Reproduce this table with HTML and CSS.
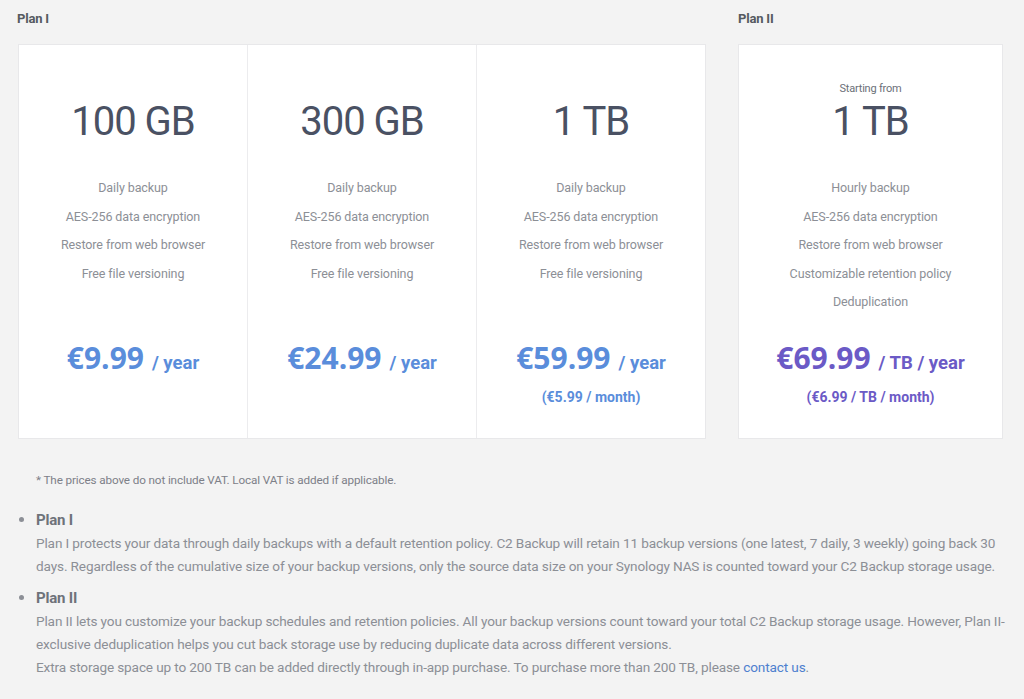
FILE: index.html
```html
<!DOCTYPE html>
<html lang="en">
<head>
<meta charset="utf-8">
<title>C2 Backup plans</title>
<link rel="stylesheet" href="styles.css">
</head>
<body>
<div class="page">
  <div class="plans">
    <section class="plan plan-one">
      <h2 class="plan-heading">Plan I</h2>
      <div class="cards">
        <div class="card">
          <div class="label"></div>
          <div class="size">100 GB</div>
          <ul class="features">
            <li>Daily backup</li>
            <li>AES-256 data encryption</li>
            <li>Restore from web browser</li>
            <li>Free file versioning</li>
          </ul>
          <div class="price"><span class="amount">€9.99</span> <span class="unit">/ year</span></div>
        </div>
        <div class="card">
          <div class="label"></div>
          <div class="size">300 GB</div>
          <ul class="features">
            <li>Daily backup</li>
            <li>AES-256 data encryption</li>
            <li>Restore from web browser</li>
            <li>Free file versioning</li>
          </ul>
          <div class="price"><span class="amount">€24.99</span> <span class="unit">/ year</span></div>
        </div>
        <div class="card">
          <div class="label"></div>
          <div class="size">1 TB</div>
          <ul class="features">
            <li>Daily backup</li>
            <li>AES-256 data encryption</li>
            <li>Restore from web browser</li>
            <li>Free file versioning</li>
          </ul>
          <div class="price"><span class="amount">€59.99</span> <span class="unit">/ year</span></div>
          <div class="sub-price">(€5.99 / month)</div>
        </div>
      </div>
    </section>
    <section class="plan plan-two">
      <h2 class="plan-heading">Plan II</h2>
      <div class="cards">
        <div class="card purple">
          <div class="label">Starting from</div>
          <div class="size">1 TB</div>
          <ul class="features">
            <li>Hourly backup</li>
            <li>AES-256 data encryption</li>
            <li>Restore from web browser</li>
            <li>Customizable retention policy</li>
            <li>Deduplication</li>
          </ul>
          <div class="price"><span class="amount">€69.99</span> <span class="unit">/ TB / year</span></div>
          <div class="sub-price">(€6.99 / TB / month)</div>
        </div>
      </div>
    </section>
  </div>

  <p class="note">* The prices above do not include VAT. Local VAT is added if applicable.</p>

  <ul class="details">
    <li>
      <h3>Plan I</h3>
      <p>Plan I protects your data through daily backups with a default retention policy. C2 Backup will retain 11 backup versions (one latest, 7 daily, 3 weekly) going back 30 days. Regardless of the cumulative size of your backup versions, only the source data size on your Synology NAS is counted toward your C2 Backup storage usage.</p>
    </li>
    <li>
      <h3>Plan II</h3>
      <p>Plan II lets you customize your backup schedules and retention policies. All your backup versions count toward your total C2 Backup storage usage. However, Plan II-exclusive deduplication helps you cut back storage use by reducing duplicate data across different versions.<br>Extra storage space up to 200 TB can be added directly through in-app purchase. To purchase more than 200 TB, please <a href="#">contact us</a>.</p>
    </li>
  </ul>
</div>
</body>
</html>
```

FILE: styles.css
```css
html, body {
  margin: 0;
  padding: 0;
}
body {
  background: #f3f3f3;
  font-family: Roboto, "Liberation Sans", sans-serif;
  color: #8c8f96;
}
.page {
  padding: 11px 17px 0 17px;
}
.plans {
  display: grid;
  grid-template-columns: 689px 266px;
  column-gap: 31px;
}
.plan-heading {
  margin: 0 0 17px;
  font-size: 13px;
  line-height: 16px;
  font-weight: 700;
  color: #555a60;
  letter-spacing: -0.2px;
}
.plan-two .plan-heading {
  padding-left: 1px;
}
.cards {
  display: flex;
  margin-left: 1px;
  background: #fff;
  border: 1px solid #e8e8ea;
}
.card {
  flex: 1 1 0;
  height: 393px;
  padding-top: 36px;
  box-sizing: border-box;
  display: flex;
  flex-direction: column;
  align-items: center;
  text-align: center;
}
.card + .card {
  border-left: 1px solid #ececee;
}
.label {
  height: 16px;
  font-size: 11px;
  line-height: 16px;
  color: #6b6f78;
  letter-spacing: -0.2px;
}
.size {
  font-size: 40px;
  line-height: 50px;
  font-weight: 400;
  color: #4a5163;
  letter-spacing: -1px;
}
.features {
  list-style: none;
  margin: 27px 0 0;
  padding: 0;
  height: 143px;
  font-size: 12.5px;
  line-height: 28.5px;
  color: #8c8f96;
  letter-spacing: -0.1px;
}
.price {
  margin-top: 21px;
  line-height: 40px;
  color: #5a8ddb;
  white-space: nowrap;
}
.amount {
  font-family: "Open Sans", Roboto, sans-serif;
  font-size: 30px;
  font-weight: 700;
}
.unit {
  font-size: 18.5px;
  font-weight: 700;
  margin-left: 4px;
}
.sub-price {
  margin-top: 3px;
  font-size: 14px;
  line-height: 20px;
  font-weight: 700;
  color: #5a8ddb;
}
.purple .price,
.purple .sub-price {
  color: #6b5ac6;
}
.note {
  margin: 33px 0 0 19px;
  font-size: 11.7px;
  line-height: 16px;
  color: #7d8088;
  letter-spacing: -0.12px;
}
.details {
  margin: 21px 0 0;
  padding: 0 0 0 19px;
  list-style: disc;
  color: #8c8f96;
}
.details li + li {
  margin-top: 9px;
}
.details h3 {
  margin: 0;
  font-size: 15px;
  line-height: 23px;
  font-weight: 700;
  color: #6e727a;
  letter-spacing: -0.2px;
}
.details p {
  margin: 0;
  font-size: 13.6px;
  line-height: 23px;
  letter-spacing: -0.13px;
}
.details a {
  color: #4e80cf;
  text-decoration: none;
}
```
